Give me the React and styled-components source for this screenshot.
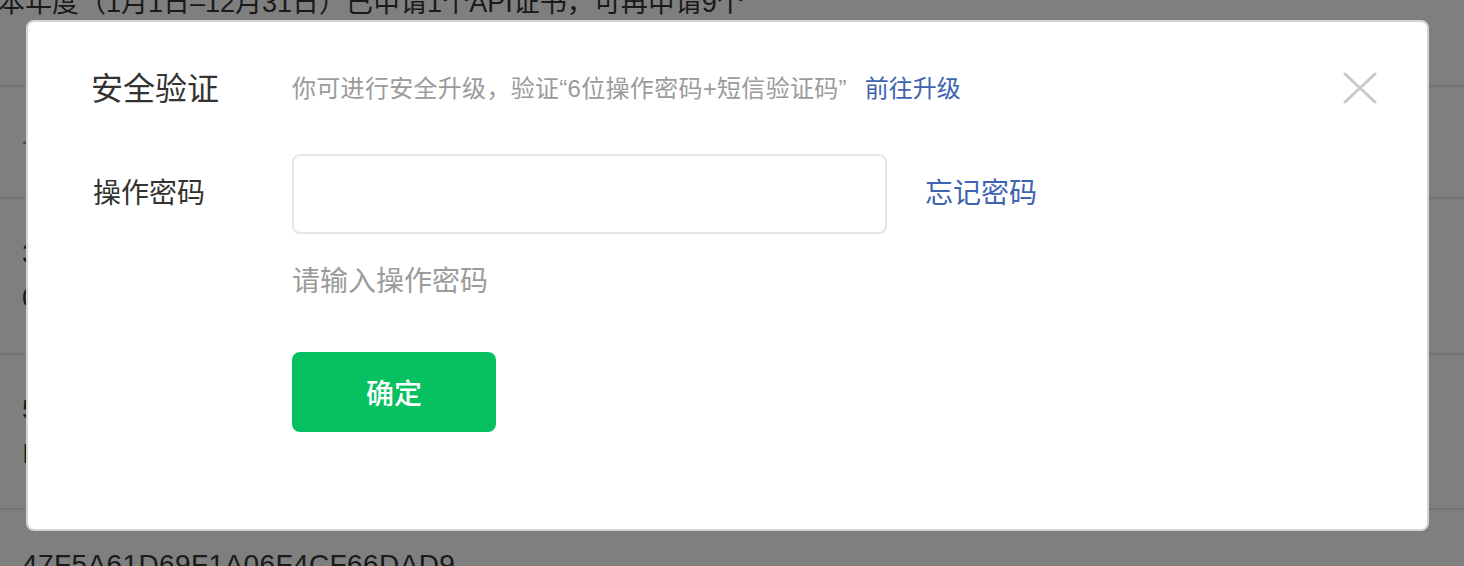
import styled, { createGlobalStyle } from 'styled-components';

const GlobalStyle = createGlobalStyle`
  html, body {
    margin: 0;
    padding: 0;
    overflow: hidden;
    background: #fff;
  }

  body {
    font-family: "Liberation Sans", "Noto Sans CJK SC", sans-serif;
    color: #353535;
  }

  * {
    box-sizing: border-box;
  }
`;

const Page = styled.div`
  width: 1464px;
  height: 566px;
  overflow: hidden;
`;

const Notice = styled.p`
  margin: -12px 0 0 -2px;
  height: 30px;
  font-size: 27px;
  line-height: 30px;
  white-space: nowrap;
`;

const Table = styled.div`
  margin-top: 67px;
  display: flex;
  flex-direction: column;
`;

const TableRow = styled.div`
  height: ${({ $height }) => $height}px;
  display: flex;
  align-items: center;
  justify-content: space-between;
  padding: 0 28px 0 22px;
  border-top: 2px solid #e9e9e9;
  font-size: 28px;
  color: ${({ $head }) => ($head ? '#888' : '#353535')};
`;

const Serial = styled.div`
  display: flex;
  flex-direction: column;
  line-height: 44px;
  letter-spacing: 0.4px;
`;

const Overlay = styled.div`
  position: fixed;
  inset: 0;
  background: rgba(0, 0, 0, 0.5);
`;

const Modal = styled.div`
  position: fixed;
  top: 20px;
  left: 26px;
  width: 1403px;
  padding: 47px 0 97px 65px;
  background: #fff;
  border: 2px solid #d4d4d4;
  border-radius: 8px;
`;

const CloseButton = styled.button`
  position: absolute;
  top: 50px;
  right: 50px;
  width: 34px;
  height: 32px;
  padding: 0;
  border: none;
  background: none;
  cursor: pointer;

  & > svg {
    display: block;
  }
`;

const Row = styled.div`
  display: flex;
  align-items: center;
  margin-top: ${({ $gap = 0 }) => $gap}px;
`;

const Label = styled.div`
  width: 199px;
  flex-shrink: 0;
  margin-left: ${({ $title }) => ($title ? '-2px' : '0')};
  font-size: ${({ $title }) => ($title ? '32px' : '28px')};
  line-height: 40px;
  color: #333;
`;

const Desc = styled.span`
  margin-left: ${({ $offset = 0 }) => $offset}px;
  font-size: 24px;
  line-height: 40px;
  letter-spacing: 0.3px;
  color: #9b9b9b;
`;

const Link = styled.a`
  margin-left: ${({ $gap }) => $gap}px;
  font-size: ${({ $size }) => $size}px;
  line-height: 40px;
  color: #3e63b0;
  text-decoration: none;
  cursor: pointer;
`;

const Input = styled.input`
  width: 595px;
  height: 80px;
  padding: 0 22px;
  border: 2px solid #e6e6e6;
  border-radius: 8px;
  font: inherit;
  font-size: 28px;
  outline: none;
`;

const Hint = styled.div`
  margin-left: 199px;
  font-size: 28px;
  line-height: 40px;
  color: #9b9b9b;
`;

const Confirm = styled.button`
  margin-left: 199px;
  width: 204px;
  height: 80px;
  border: none;
  border-radius: 8px;
  background: #07c160;
  color: #fff;
  font-family: inherit;
  font-size: 28px;
  font-weight: 500;
  cursor: pointer;
`;

const rows = [
  ['3B1E0C9A4D27F85E61C3A90B2', '0F4D7A28E5C19B63D0A7F41C8'],
  ['5C82E0A1F39D47B6E28C05A3F', 'ID7C3B9E04A6F21D85C0E7B93'],
  ['47F5A61D69F1A06F4CF66DAD9', '2C3E81B0A5D47F9E60C1B8A74'],
];

function App() {
  return (
    <>
      <GlobalStyle />
      <Page>
        <Notice>本年度（1月1日–12月31日）已申请1个API证书，可再申请9个</Notice>
        <Table>
          <TableRow $head $height={112}>
            <span>一 证书序列号</span>
            <span>操作：</span>
          </TableRow>
          {rows.map((lines, i) => (
            <TableRow key={i} $height={i === 0 ? 156 : 155}>
              <Serial>
                {lines.map((line) => (
                  <span key={line}>{line}</span>
                ))}
              </Serial>
            </TableRow>
          ))}
        </Table>
      </Page>

      <Overlay />
      <Modal>
        <CloseButton aria-label="关闭">
          <svg width="34" height="32" viewBox="0 0 34 32">
            <path
              d="M2 2 L32 30 M32 2 L2 30"
              stroke="#c9c9c9"
              strokeWidth="3"
              strokeLinecap="round"
              fill="none"
            />
          </svg>
        </CloseButton>

        <Row>
          <Label $title>安全验证</Label>
          <Desc $offset={2}>你可进行安全升级，验证“6位操作密码+短信验证码”</Desc>
          <Link $gap={18} $size={24}>
            前往升级
          </Link>
        </Row>

        <Row $gap={45}>
          <Label>操作密码</Label>
          <Input type="password" />
          <Link $gap={38} $size={28}>
            忘记密码
          </Link>
        </Row>

        <Row $gap={28}>
          <Hint>请输入操作密码</Hint>
        </Row>

        <Row $gap={50}>
          <Confirm>确定</Confirm>
        </Row>
      </Modal>
    </>
  );
}

export default App;
